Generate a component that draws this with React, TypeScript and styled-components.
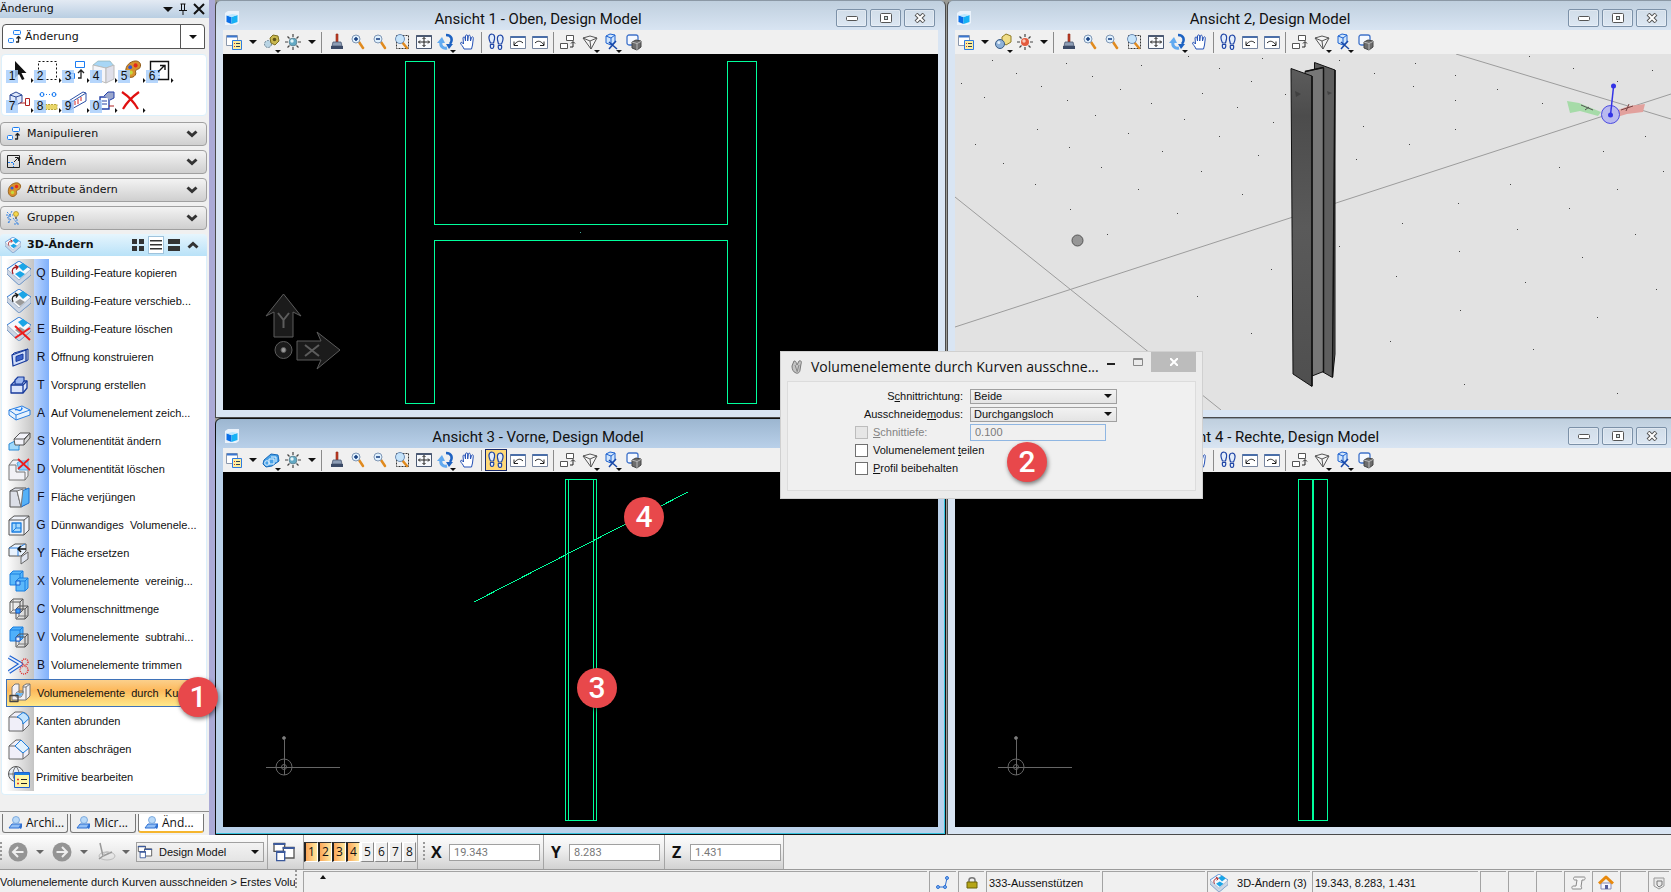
import React from "react";
import type { ReactNode } from "react";
import styled, { createGlobalStyle, css } from "styled-components";

const ui = `"Liberation Sans", Arial, sans-serif`;
const title = `"Open Sans", "Noto Sans", sans-serif`;
const caption = `Roboto, "Open Sans", sans-serif`;
const wide = `"DejaVu Sans", Verdana, sans-serif`;

const Global = createGlobalStyle`
  *, *::before, *::after { box-sizing: border-box; }
  body { margin: 0; background: #f0f0f0; font-family: ${ui}; font-size: 12px; color: #111; }
  button, select, input { font: inherit; color: inherit; margin: 0; }
  button { padding: 0; border: 0; background: none; }
  svg { display: block; flex: none; }
`;

/* ---------- icons ---------- */

const Ic = ({ s = 18, children }: { s?: number; children: ReactNode }) => (
  <svg width={s} height={s} viewBox={`0 0 ${s} ${s}`} fill="none" strokeLinejoin="round" aria-hidden="true">
    {children}
  </svg>
);

const Caret = ({ s = 8 }: { s?: number }) => (
  <svg width={s} height={s / 2} viewBox="0 0 8 4" aria-hidden="true">
    <path d="M0 0h8L4 4z" fill="currentColor" />
  </svg>
);

const manipulate = (
  <Ic s={16}>
    <rect x="6.5" y="1.5" width="7" height="4" rx="1" stroke="#1c7df2" fill="#f4faff" />
    <rect x="1.5" y="9.5" width="5" height="4" rx="1" stroke="#1c7df2" fill="#f4faff" />
    <path d="M9 13h2.500V8M9.500 9.500l2-2 2 2" stroke="#222" strokeWidth="1.300" />
  </Ic>
);
const modify = (
  <Ic s={16}>
    <rect x="1.500" y="1.500" width="12" height="12" stroke="#222" />
    <path d="M2 8.500h5.500V13" stroke="#1c7df2" strokeDasharray="2 1" />
    <path d="M8 8l4-4M9 3.500h3.500V7" stroke="#222" />
  </Ic>
);
const Palette = ({ s }: { s: number }) => (
  <svg width={s} height={s} viewBox="0 0 16 16" aria-hidden="true">
    <path d="M9 1C13 0 16 3 14 6.500c-1 1.700-3 1-3.500 2.500-.5 1.300 1 2-.5 3.800C8 15.500 3.500 15 2.500 11 1.500 6.500 4 2.200 9 1z" fill="#d9902d" stroke="#8a5511" strokeWidth=".8" />
    <circle cx="6" cy="6" r="1.600" fill="#2f58d8" />
    <circle cx="10.500" cy="4.500" r="1.700" fill="#e22b1b" />
    <circle cx="6.500" cy="10.500" r="1.700" fill="#c5d93e" />
  </svg>
);
const groups = (
  <Ic s={16}>
    <path d="M1 2l3 3M6 1L4 5M1 8l4-2M2 13l3-4M7 8l4 5M11 9v5M8 14h6M3 5v9M0 5h7" stroke="#3d86e0" strokeDasharray="2 1" />
    <circle cx="10" cy="4" r="2.500" fill="#f5d84d" stroke="#a8821c" strokeWidth=".7" />
    <path d="M9 7h2v2H9z" fill="#777" />
  </Ic>
);
const Feature = ({ s = 24, x, arrow = true, grey }: { s?: number; x?: boolean; arrow?: boolean; grey?: boolean }) => (
  <svg width={s} height={s} viewBox="0 0 24 24" aria-hidden="true">
    <path d="M0 8L12 0l12 8v6L12 24 0 13z" fill="#f6f8fb" stroke="#2f7bd6" />
    <path d="M0 8l12 11 12-11v6L12 24 0 13z" fill="#cdd6e4" stroke="#7e95b5" strokeWidth=".6" />
    <path d="M11 5l5-3 5 4-5 4z" fill="#1ba5e6" />
    <path d="M8 13l5-3 5 3-5 4z" fill={grey ? "#9a9a9a" : "#1ba5e6"} />
    {arrow && <path d="M6 13c-2-4 0-7 4-7M8 4l3 2-2 2.500" fill="none" stroke={grey ? "#222" : "#a3161c"} strokeWidth="1.300" />}
    {x && <path d="M8 9l15 14M23 11L8 21" stroke="#ec1c1c" strokeWidth="2" />}
  </svg>
);
const icOpening = (
  <Ic s={24}>
    <path d="M5 10l14-5v11L6 21z" fill="#cfdcf8" stroke="#173a9c" strokeWidth="1.300" />
    <path d="M9 11.500l7-2.500v5L9 16.500z" fill="#3d63c9" stroke="#173a9c" />
    <path d="M5 10l2-2 14-4-2 1M21 4v11l-2 1" stroke="#173a9c" />
  </Ic>
);
const icBoss = (
  <Ic s={24}>
    <path d="M4 12l4-4h12v7l-4 5H4z" fill="#dbe5fb" stroke="#173a9c" strokeWidth="1.300" />
    <path d="M4 12h12v8M16 12l4-4" stroke="#173a9c" strokeWidth="1.300" />
    <path d="M8 11V7l3-3h6v4l-2 3z" fill="#9db8f0" stroke="#173a9c" strokeWidth="1.200" />
  </Ic>
);
const icDraw = (
  <Ic s={24}>
    <path d="M2 9l13-4 8 4v5L9 19l-7-5z" fill="#e6f2fe" stroke="#2b7fe0" />
    <path d="M2 9l7 5 14-5M9 14v5" stroke="#2b7fe0" />
    <path d="M8 9c2-2 4 2 6 0s1-2 0-2" stroke="#1c7df2" strokeWidth="1.300" />
  </Ic>
);
const icSolidMod = (
  <Ic s={24}>
    <path d="M2 15l6-3h9l-5 5v4H2z" fill="#9fd8fb" stroke="#2b8ad6" />
    <path d="M7 10l6-6h10l-6 7v5H8z" fill="#f3f3fa" stroke="#555" />
    <path d="M7 10h10l6-6v5l-6 7" stroke="#555" />
  </Ic>
);
const icSolidDel = (
  <Ic s={24}>
    <path d="M2 8l4-5h7v9h8v7l-3 4H2z" fill="#f1f1f6" stroke="#777" />
    <path d="M2 8h7v7h9v8" stroke="#777" />
    <path d="M10 6l3-2h8v9h-9z" fill="#8fd0fb" stroke="#5aa5dd" />
    <path d="M11 2l12 11M22 2L11 12" stroke="#ec1c1c" strokeWidth="1.700" />
  </Ic>
);
const icTaper = (
  <Ic s={24}>
    <path d="M3 6l5-3h11v16l-5 3H3z" fill="#dcdfe8" stroke="#555" />
    <path d="M3 6h7l4 16" stroke="#555" />
    <path d="M15 6l7-3v15l-8 4z" fill="#56b1f7" stroke="#1b6fd1" />
    <path d="M10 6l4 16 2-18z" fill="#f7f8fb" stroke="#777" />
  </Ic>
);
const icShell = (
  <Ic s={24}>
    <path d="M2 7l5-4h15v14l-5 5H2z" fill="#eef1f8" stroke="#555" />
    <path d="M2 7h15v15M17 7l5-4" stroke="#555" />
    <path d="M5 10h9v9H5z" fill="#a6d8fc" stroke="#1b7ee0" strokeWidth="1.300" />
    <path d="M5 19l4-4v-5M9 15h5" stroke="#1b7ee0" />
  </Ic>
);
const icReplace = (
  <Ic s={24}>
    <path d="M2 7l6-4h11v7l-5 5H2z" fill="#e8f2fd" stroke="#555" />
    <path d="M2 7h9v8M11 7l7-4" stroke="#2b7fe0" />
    <path d="M19 8h-7M14 5l-3 3 3 3" stroke="#111" strokeWidth="1.500" />
    <path d="M14 16l7-5v7l-7 5z" fill="#dfe4ef" stroke="#666" />
  </Ic>
);
const edgeColor = (fill: string) => (fill === "none" ? "#555" : "#1b7ee0");
const Bool = ({ a, b, c }: { a: string; b: string; c: string }) => (
  <Ic s={24}>
    <path d="M3 5l3-3h10v11l-3 3H3z" fill={a} stroke={edgeColor(a)} />
    <path d="M3 5h10v11M13 5l3-3" stroke={edgeColor(a)} />
    {a === "none" && <path d="M6 2v11h10M6 13l-3 3" stroke="#777" />}
    <path d="M9 12l3-3h9v10l-3 3H9z" fill={b} stroke={edgeColor(b)} />
    <path d="M9 12h9v10M18 12l3-3" stroke={edgeColor(b)} />
    {b === "none" && <path d="M12 9v10h9M12 19l-3 3" stroke="#777" />}
    <path d="M9 12h4v4H9z" fill={c} stroke="#1b5fd1" />
  </Ic>
);
const icTrim = (
  <Ic s={24}>
    <path d="M2 4l12 7L2 19" stroke="#1b5fd1" strokeWidth="4" />
    <path d="M2 4l12 7L2 19" stroke="#e4effc" strokeWidth="2" />
    <circle cx="18" cy="9" r="3" stroke="#e02b2b" strokeDasharray="1 1" strokeWidth="1.500" />
    <circle cx="17" cy="17" r="4" stroke="#e02b2b" strokeDasharray="1 1" strokeWidth="1.500" />
  </Ic>
);
const icCut = (
  <Ic s={24}>
    <path d="M4 6l3-3h4v9h4V5l3-2h4v12l-4 4H4z" fill="#f2f0f4" stroke="#777" />
    <path d="M8 12l3-2h4v3l-2 3H8zM18 19V6l4-3M18 6h-3" stroke="#777" fill="none" />
    <path d="M8 12h7l-2 3H8z" fill="#6ab8f7" />
    <path d="M2 14.500h8v6H2z" stroke="#444" strokeWidth="1.300" />
  </Ic>
);
const icRound = (
  <Ic s={24}>
    <path d="M2 8l6-5h6c5 0 8 4 8 7v6l-6 6H2z" fill="#f0eff9" stroke="#666" />
    <path d="M2 8h6c5 0 8 4 8 7v7" stroke="#666" />
    <path d="M10 8l6-4.500c3 1 5.500 3.500 6 6L16 15c0-3-2-6-6-7z" fill="#c3e4fd" stroke="#1b7ee0" />
  </Ic>
);
const icChamfer = (
  <Ic s={24}>
    <path d="M2 9l7-6h5l8 8v6l-6 5H2z" fill="#f0eff9" stroke="#666" />
    <path d="M2 9h6l8 7v6" stroke="#666" />
    <path d="M8 9l6-6 8 8-6 5z" fill="#e2f1fd" stroke="#1b7ee0" />
  </Ic>
);
const icPrim = (
  <Ic s={24}>
    <circle cx="9" cy="9" r="7.500" fill="#e8edf4" stroke="#555" />
    <path d="M2 9h14M9 1.500c-4 4-4 11 0 15M9 1.500c4 4 4 11 0 15" stroke="#555" strokeWidth=".8" />
    <rect x="7.500" y="7.500" width="15" height="15" fill="#fff6a5" stroke="#1b5fd1" />
    <path d="M8 9h14" stroke="#1b7ee0" strokeWidth="2" />
    <path d="M10 14.500h2M10 18.500h2" stroke="#d33" strokeWidth="1.500" />
    <path d="M14 14.500h6M14 18.500h6" stroke="#222" />
  </Ic>
);

/* view toolbar icons, 18px */
const vbProps = (
  <Ic>
    <path d="M1.500 2.500h11v10h-11z" fill="#fff" stroke="#8b98ad" />
    <path d="M2 3.500h10" stroke="#3b76cf" strokeWidth="2" />
    <path d="M7.500 7.500h9v9h-9z" fill="#ffef9f" stroke="#2f7be0" />
    <path d="M9 10.500h1M9 13.500h1" stroke="#c33" />
    <path d="M11 10.500h4M11 13.500h4" stroke="#345" />
  </Ic>
);
const vbGearA = (
  <Ic>
    <circle cx="6" cy="11" r="3.500" fill="#b9d4e4" stroke="#6b8393" strokeDasharray="2 1" />
    <path d="M8 5l3-3 5 1 1 5-4 4-4-2z" fill="#c9b84f" stroke="#7d6f22" />
    <circle cx="12.500" cy="6.500" r="1.800" fill="#5f5518" />
  </Ic>
);
const vbGearB = (
  <Ic>
    <path d="M8 4l4-3 5 2v6l-5 3-4-3z" fill="#f0dd86" stroke="#8f7b25" />
    <circle cx="6" cy="11" r="4.500" fill="#8fb2d9" stroke="#3b5d86" />
    <circle cx="4.800" cy="9.500" r="1.500" fill="#e6f1fb" />
  </Ic>
);
const vbGearC = (
  <Ic>
    <path d="M2 9l7-6 7 1 1 6-7 5-6 1-3-3z" fill="#4ba3e8" stroke="#1567b8" />
    <path d="M7 8h5v5H7zM9 6h5v5" stroke="#e8f6ff" />
    <circle cx="5" cy="12" r="2.300" stroke="#dff1ff" />
  </Ic>
);
const Sun = ({ c }: { c: string }) => (
  <Ic>
    <path d="M9 1v3M9 14v3M1 9h3M14 9h3M3.500 3.500l2 2M12.500 12.500l2 2M14.500 3.500l-2 2M5.500 12.500l-2 2" stroke="#444" strokeWidth="1.200" />
    <circle cx="9" cy="9" r="4" fill={c === "red" ? "#e35b3e" : "#62a9c4"} stroke={c === "red" ? "none" : "#55717c"} strokeWidth=".6" />
    <circle cx="8" cy="8" r="1.700" fill={c === "red" ? "#f9c8b8" : "#e2f5fa"} />
  </Ic>
);
const vbBrush = (
  <Ic>
    <path d="M9 1h2v8H9z" fill="#c33d25" stroke="#8a2816" strokeWidth=".6" />
    <path d="M6 9h8l1 4H5z" fill="#8d9db5" stroke="#4b5972" strokeWidth=".8" />
    <path d="M4 13h12v3H4z" fill="#3b4a66" />
  </Ic>
);
const Lens = ({ plus }: { plus?: boolean }) => (
  <Ic>
    <path d="M10 9l4 6" stroke="#e08a1e" strokeWidth="2.500" strokeLinecap="round" />
    <circle cx="7" cy="6" r="4" fill="#dff0fd" stroke="#8097b5" />
    <path d={plus ? "M5 6h4M7 4v4" : "M5 6h4"} stroke="#123a7d" strokeWidth="1.500" />
  </Ic>
);
const vbZoomWin = (
  <Ic>
    <path d="M3.500 2.500h12v13h-12z" stroke="#333" strokeDasharray="2 1" />
    <path d="M9 9l5 6" stroke="#e08a1e" strokeWidth="2.500" strokeLinecap="round" />
    <circle cx="7" cy="6" r="4.500" fill="#c5e3fa" stroke="#6e8db5" />
  </Ic>
);
const vbFit = (
  <Ic>
    <path d="M1.500 2.500h15v13h-15z" fill="#f7f9fc" stroke="#4b5972" />
    <path d="M1.500 3h15" stroke="#4b5972" strokeWidth="2" />
    <path d="M9 4.500v9M3.500 9h11M7.500 6L9 4.500 10.500 6M7.500 12L9 13.500l1.500-1.500M5 7.500L3.500 9 5 10.500M13 7.500L14.500 9 13 10.500" stroke="#222" />
  </Ic>
);
const vbRotate = (
  <Ic>
    <path d="M9 2c6 0 7 5 4 9" stroke="#1d62c2" strokeWidth="2.500" />
    <path d="M9 11h7l-4 5z" fill="#1d62c2" />
    <path d="M10 15C6 16 3 13 4 9" stroke="#62aaf0" strokeWidth="3" />
    <path d="M0 10h8L5 4z" fill="#62aaf0" />
  </Ic>
);
const vbHand = (
  <Ic>
    <path d="M5 16c-1-3-3-4-3.500-6 .5-1.500 2-.5 3 1L4 5c.3-1.500 1.800-1.500 2 0l.5 3V3c.3-1.500 2-1.500 2.200 0v5l.6-5c.4-1.300 2-1 2 .4L11.500 8l1-3.500c.6-1.200 2-.7 1.800.7L13.500 12l-1 4z" fill="#fff" stroke="#2450b5" />
  </Ic>
);
const vbFeet = (
  <Ic>
    <g fill="#e3edfb" stroke="#1f45a5" strokeWidth="1.200">
      <path d="M4.500 1C7 1 8 3 7.500 6L6.500 10h-3C2 7 .5 2 4.500 1z" />
      <path d="M3.500 11.500h3.200c.3 2-.2 4-1.700 4s-2-2-1.500-4z" />
      <path d="M13.500 2c-2.500 0-3.500 2-3 5l1 4h3c1.500-3 3-8-1-9z" />
      <path d="M14.500 12.500h-3.200c-.3 2 .2 4 1.700 4s2-2 1.500-4z" />
    </g>
  </Ic>
);
const Nav = ({ fwd }: { fwd?: boolean }) => (
  <Ic>
    <path d="M1.500 3.500h15v12h-15z" fill="#fff" stroke="#77859e" />
    <path d="M1.500 4h15" stroke="#4a6ea8" strokeWidth="2" />
    {fwd ? <path d="M4 10c3-3 6-2 9 2M13 8.500V12.500H9" stroke="#222" /> : <path d="M14 10c-3-3-6-2-9 2M5 8.500v4h4" stroke="#222" />}
  </Ic>
);
const vbCopy = (
  <Ic>
    <path d="M7.500 2.500h7v5h-7zM1.500 10.500h7v5h-7z" fill="#fff" stroke="#555" />
    <path d="M11 14h3V9M12 10.500L14 8.500l2 2" stroke="#222" />
  </Ic>
);
const vbCam = (
  <Ic>
    <path d="M2 5l7-2 7 2-6 11z" fill="#f4f4f4" stroke="#555" />
    <path d="M2 5l7 3 7-3M9 8l1 8" stroke="#555" />
  </Ic>
);
const vbClip = (
  <Ic>
    <path d="M3 3l4-2 5 1v7l-4 3-5-2z" fill="#cfe4fb" stroke="#1d62d0" />
    <path d="M3 3l5 2 4-3M8 5v7" stroke="#1d62d0" />
    <path d="M6 9l8 7M13 8l-7 8" stroke="#1747a8" strokeWidth="1.500" />
  </Ic>
);
const vbCube = (
  <Ic>
    <rect x="2" y="2" width="11" height="10" rx="2" fill="#f4f8ff" stroke="#3f72c9" strokeWidth="1.300" />
    <path d="M7 9l4-2 5 1v6l-4 3-5-2z" fill="#6d6d6d" stroke="#444" />
    <path d="M7 9l5 1.500 4-2M12 10.500V17" stroke="#ccc" strokeWidth=".8" />
  </Ic>
);
const winIcon = (
  <Ic s={16}>
    <path d="M1 3l3-2h11v12l-3 2H1z" fill="#eaf2fb" />
    <path d="M2.500 5.500l5 1.500v7l-5-2z" fill="#0a6fe8" />
    <path d="M7.500 7l6-2v7l-6 2z" fill="#16b1f5" />
    <path d="M2.500 5.500l6-1.500 5 1-6 2z" fill="#b9e6ff" />
  </Ic>
);
const person = (
  <Ic s={16}>
    <path d="M4 9h9l-2 4H1z" fill="#8fbdf5" stroke="#2d6fd2" />
    <path d="M11 13l2-4 1-1v4l-1 2z" fill="#2d6fd2" />
    <circle cx="8" cy="5" r="3.500" fill="#b9d9f8" stroke="#5c93d4" strokeWidth=".7" />
  </Ic>
);
const modelsIcon = (s: number) => (
  <svg width={s} height={s} viewBox="0 0 18 18" fill="none" aria-hidden="true">
    <path d="M1.500 2.500h8v6h-8z" fill="#fff" stroke="#555" />
    <path d="M8.500 5.500h8v8h-8z" fill="#fff" stroke="#555" />
    <path d="M3.500 8.500h6v7h-6z" fill="#fff" stroke="#3c5a9c" />
    <path d="M1 3h9M8 6h9M3 9h7" stroke="#3c5a9c" strokeWidth="1.500" />
  </svg>
);

/* palette tiles, 28 x 24 */
const pal: { label: string; art: ReactNode }[] = [
  { label: "1", art: <path d="M9 1v17l4-4 3 6 2.500-1-3-6h5z" fill="#111" /> },
  { label: "2", art: <path d="M4.500 1.500h18v18h-18z" stroke="#111" strokeDasharray="2 2" fill="none" /> },
  { label: "3", art: <g fill="none"><path d="M13.500 1.500h9v6h-9z" stroke="#1c7df2" /><path d="M7.500 13.500h5v5h-5z" stroke="#1c7df2" /><path d="M16 18h3v-7M16 13l3-3 3 3" stroke="#222" strokeWidth="1.300" /></g> },
  { label: "4", art: <g><path d="M3 5l5-4h12l4 5-9 2z" fill="#a8d6f5" stroke="#8aa" strokeWidth=".6" /><path d="M3 5l13 3v15L3 18z" fill="#f5f5f9" stroke="#bbb" /><path d="M16 8l8-3v14l-8 4z" fill="#e0e0ea" stroke="#bbb" /></g> },
  { label: "5", art: <g transform="translate(5 0) scale(1.2)"><Palette s={16} /></g> },
  { label: "6", art: <g fill="none"><path d="M4.500 1.500h18v18h-18z" stroke="#111" strokeWidth="1.400" /><path d="M5 10.500h8V19" stroke="#1c7df2" strokeDasharray="2 1" /><path d="M12 12l6-6M14 5.500h5V10" stroke="#111" strokeWidth="1.400" /></g> },
  { label: "7", art: <g fill="none" stroke="#2a4796"><path d="M4 5l6-3 6 3v7l-6 3-6-3z" fill="#dfe9fb" /><path d="M4 5l6 2 6-2M10 7v7" /><path d="M14 13h6M19.500 8.500h4v7h-4z" stroke="#b02222" /></g> },
  { label: "8", art: <g fill="none"><path d="M6 4.500h16" stroke="#1c7df2" strokeDasharray="1 2" /><circle cx="8" cy="4.500" r="2" stroke="#1c7df2" /><circle cx="20" cy="4.500" r="2" stroke="#1c7df2" /><path d="M8 14.500h15v5H8z" fill="#e9d668" stroke="#bba83c" strokeDasharray="2 1" /></g> },
  { label: "9", art: <g><path d="M5 12L21 2l3 1v8L8 20l-3-2z" fill="#fff" stroke="#2a4fa6" /><path d="M5 12l3 1 16-10" fill="none" stroke="#2a4fa6" /><path d="M10 13v5M13 11v4M16 9v5M19 7v4" stroke="#d02424" /></g> },
  { label: "0", art: <g fill="none" stroke="#2440a8"><path d="M10 7h9v12h-9z" fill="#fff" strokeWidth="1.400" /><path d="M12 11h5M12 14h5" /><path d="M14 6l4-4h6v6l-4 2" fill="#9aa6cc" /><path d="M6 15l5-3M19 16h5" stroke="#b02222" /></g> },
  { label: "", art: <path d="M4 2c6 4 12 10 16 17M21 2C14 7 9 12 5 19" fill="none" stroke="#e01010" strokeWidth="2.200" /> },
];

/* ---------- layout ---------- */

const Shell = styled.div`
  display: flex;
  flex-direction: column;
  height: 100vh;
  min-height: 892px;
  overflow: hidden;
`;
const Main = styled.div`
  display: flex;
  flex: 1;
  min-height: 0;
`;
const Sidebar = styled.aside`
  position: relative;
  z-index: 3;
  width: 215px;
  flex: none;
  display: flex;
  flex-direction: column;
  background: #f0f0f0;
  border-right: 6px solid #abaad6;
`;
const DockTitle = styled.header`
  height: 18px;
  display: flex;
  align-items: center;
  gap: 6px;
  padding-right: 4px;
  background: linear-gradient(#e3eaf3, #b9cee2);
  font: 11px/18px ${wide};
  span { flex: 1; }
`;
const Combo = styled.button`
  display: flex;
  align-items: center;
  height: 25px;
  margin: 6px 4px 0 2px;
  padding-left: 4px;
  gap: 2px;
  background: #fff;
  border: 1px solid #555;
  border-radius: 4px 4px 0 0;
  font: 11px/20px ${wide};
  text-align: left;
  > span { flex: 1; }
  i {
    display: flex;
    align-items: center;
    justify-content: center;
    width: 24px;
    height: 100%;
    border-left: 1px solid #555;
  }
`;
const PaletteBox = styled.div`
  display: grid;
  grid-template-columns: repeat(6, 28px);
  grid-auto-rows: 30px;
  height: 62px;
  margin: 5px 2px 6px 1px;
  padding: 5px 0 0 4px;
  background: #fff;
  border: 1px solid #dcf0fb;
  border-radius: 4px;
`;
const Tile = styled.button`
  position: relative;
  width: 28px;
  height: 24px;
  b {
    position: absolute;
    left: 0;
    bottom: 1px;
    width: 12px;
    height: 13px;
    background: #a5cdfbd0;
    font: 12px/13px ${ui};
    text-align: center;
  }
`;
const Section = styled.button`
  display: flex;
  align-items: center;
  gap: 5px;
  height: 24px;
  flex: none;
  margin: 0 2px 4px 0;
  padding: 0 8px 0 5px;
  background: linear-gradient(#f3f3f3, #cfcfcf);
  border: 1px solid #a0a0a0;
  border-radius: 4px;
  font: 11px/20px ${wide};
  text-align: left;
  > span { flex: 1; }
`;
const OpenSection = styled.div`
  display: flex;
  align-items: center;
  height: 22px;
  flex: none;
  margin-right: 2px;
  padding: 0 8px 0 5px;
  gap: 6px;
  background: linear-gradient(#e6f5fd, #b9e2f8);
  border-radius: 4px 4px 0 0;
  font: bold 11px/20px ${wide};
  > span { flex: 1; }
`;
const Modes = styled.div`
  display: flex;
  gap: 4px;
  button { width: 14px; height: 16px; }
  button:nth-child(2) { background: #fff; outline: 1px solid #9fc3dc; }
`;
const ToolList = styled.div`
  display: flex;
  flex-direction: column;
  margin: 0 2px 0 1px;
  padding: 3px 0;
  background: #fff;
  border: 1px solid #dcf0fb;
  border-top: 0;
  border-radius: 0 0 4px 4px;
`;
const Tool = styled.button<{ $keyed: boolean; $active?: boolean }>`
  position: relative;
  display: flex;
  align-items: center;
  height: 28px;
  margin-left: 4px;
  text-align: left;
  font: 12px/14px ${ui};
  white-space: pre;
  background: ${(p) =>
    p.$keyed
      ? "linear-gradient(90deg, #fff, #c4c4c4 28px, #bcd5fd 28px, #7fb0fb 43px, #fff 43px)"
      : "linear-gradient(90deg, #fff, #c4c4c4 28px, #fff 28px)"};
  ${(p) =>
    p.$active &&
    css`
      background: linear-gradient(#fbd08c, #fdb95c 40%, #ffe98a);
      border: 1px solid #3f72b8;
      margin-right: 2px;
      z-index: 2;
    `}
`;
const ToolIcon = styled.span`
  width: 28px;
  padding-left: 1px;
`;
const Hotkey = styled.kbd`
  width: 14px;
  font: 12px/14px ${ui};
  color: #112;
  text-align: center;
`;
const ToolText = styled.span<{ $keyed: boolean }>`
  padding-left: ${(p) => (p.$keyed ? 3 : 2)}px;
  font-size: 11px;
`;
const Tabs = styled.nav`
  display: flex;
  gap: 2px;
  margin-top: auto;
  margin-bottom: 2px;
  height: 22px;
  padding: 2px 0 0 2px;
  border-top: 1px solid #8d8d8d;
`;
const Tab = styled.button<{ $on?: boolean }>`
  display: flex;
  align-items: center;
  gap: 2px;
  width: 66px;
  padding-left: 5px;
  border: 1px solid #777;
  border-top: 0;
  border-radius: 0 0 3px 3px;
  font: 12px/16px ${title};
  background: ${(p) => (p.$on ? "#fff" : "#f0f0f0")};
  ${(p) => p.$on && "border-bottom: 2px solid #f5b52e;"}
`;

const Workspace = styled.main`
  position: relative;
  flex: 1;
  min-width: 0;
  display: grid;
  grid-template-columns: minmax(0, 731fr) minmax(0, 724fr);
  grid-template-rows: minmax(0, 418fr) minmax(0, 417fr);
  column-gap: 1px;
  background: #9a9a94;
`;
const ViewFrame = styled.section<{ $active?: boolean; $edge?: boolean }>`
  display: flex;
  flex-direction: column;
  padding: 0 ${(p) => (p.$edge ? 0 : 7)}px 7px 7px;
  border: 1px solid #4a4a4a;
  ${(p) => p.$edge && "border-right: 0;"}
  border-top-color: #8b98a5;
  border-radius: 6px ${(p) => (p.$edge ? 0 : 6)}px 0 0;
  background: ${(p) =>
    p.$active ? "linear-gradient(#9cb6d0, #bad1ea 30px)" : "linear-gradient(#bfcfde, #d9e5f3 30px)"};
  ${(p) =>
    p.$active &&
    css`
      border-color: #111;
      box-shadow: inset 0 -1px #35c3df, inset -1px 0 #35c3df;
    `}
`;
const ViewTitle = styled.header<{ $edge?: boolean }>`
  display: flex;
  align-items: center;
  gap: 3px;
  height: 29px;
  flex: none;
  padding: 5px ${(p) => (p.$edge ? 4 : 3)}px 0 1px;
  h2 {
    flex: 1;
    margin: 0;
    padding-top: 1px;
    font: 15px/20px ${caption};
    text-align: center;
    white-space: nowrap;
  }
`;
const WinButton = styled.button`
  display: flex;
  align-items: center;
  justify-content: center;
  width: 31px;
  height: 18px;
  border: 1px solid #7c91a8;
  border-radius: 2px;
  background: #ffffff30;
  box-shadow: inset 0 0 0 1px #ffffff50;
`;
const ViewTools = styled.div`
  display: flex;
  align-items: center;
  height: 24px;
  flex: none;
  background: #f0f0f0;
`;
const IconButton = styled.button<{ $on?: boolean }>`
  position: relative;
  display: flex;
  align-items: center;
  justify-content: center;
  width: 22px;
  height: 22px;
  ${(p) => p.$on && "background: #ffd978; border: 1px solid #1b2c6e;"}
`;
const MoreMark = styled.span`
  position: absolute;
  right: 1px;
  bottom: 0;
`;
const CaretButton = styled.button`
  display: flex;
  align-items: center;
  justify-content: center;
  width: 15px;
  height: 22px;
`;
const Sep = styled.span`
  width: 1px;
  height: 21px;
  margin: 0 3px 0 2px;
  background: #8b8b8b;
`;
const Canvas = styled.div<{ $light?: boolean }>`
  position: relative;
  flex: 1;
  min-height: 0;
  background: ${(p) => (p.$light ? "#e2e2e2" : "#000")};
  overflow: hidden;
  > svg { width: 100%; height: 100%; }
`;
const Badge = styled.span<{ $x: number; $y: number }>`
  position: absolute;
  left: ${(p) => p.$x - 20}px;
  top: ${(p) => p.$y - 20}px;
  z-index: 5;
  width: 40px;
  height: 40px;
  border-radius: 50%;
  background: #e8484b;
  box-shadow: 1px 2px 4px #00000080;
  color: #fff;
  font: 500 30px/40px ${caption};
  text-align: center;
`;

const Dialog = styled.section`
  position: absolute;
  z-index: 4;
  left: 565px;
  top: 351px;
  width: 423px;
  padding: 0 6px 7px;
  background: #ebebeb;
  border: 1px solid #d0d0d0;
`;
const DialogTitle = styled.header`
  display: flex;
  height: 29px;
  h2 {
    flex: 1;
    min-width: 0;
    margin: 0;
    padding-left: 6px;
    font: 14px/29px ${title};
    white-space: nowrap;
  }
  > svg { margin: 7px 0 0 2px; }
`;
const DialogButton = styled.button<{ $close?: boolean }>`
  display: flex;
  align-items: center;
  justify-content: center;
  flex: none;
  width: ${(p) => (p.$close ? 45 : 27)}px;
  height: 20px;
  ${(p) => p.$close && "background: #bcbcbc;"}
`;
const Form = styled.form`
  height: 110px;
  padding: 5px 0 0 67px;
  background: #f0f0f0;
  border: 1px solid #dcdcdc;
  font-size: 11px;
`;
const Row = styled.div`
  display: flex;
  align-items: center;
  height: 18px;
  gap: 7px;
`;
const Lead = styled.div`
  width: 108px;
  display: flex;
  align-items: center;
  justify-content: flex-end;
  label { white-space: nowrap; }
`;
const CheckLead = styled(Lead)<{ $off?: boolean }>`
  justify-content: flex-start;
  gap: 5px;
  color: ${(p) => (p.$off ? "#838383" : "inherit")};
`;
const Check = styled.input`
  appearance: none;
  flex: none;
  width: 13px;
  height: 13px;
  border: 1px solid #707070;
  background: #fff;
  &:disabled { border-color: #bcbcbc; background: #e6e6e6; }
`;
const Pick = styled.span<{ $w: number; $h: number; $pad: number }>`
  position: relative;
  display: flex;
  align-items: center;
  width: ${(p) => p.$w}px;
  height: ${(p) => p.$h}px;
  select {
    appearance: none;
    width: 100%;
    height: 100%;
    padding: 0 16px 0 ${(p) => p.$pad}px;
    border: 1px solid #a0a0a0;
    border-radius: 0;
    background: linear-gradient(#f2f2f2, #e4e4e4);
    font: 11px/13px ${ui};
  }
  > svg { position: absolute; right: 5px; pointer-events: none; }
  > svg:first-child { right: auto; left: 1px; }
`;
const DepthField = styled.input`
  width: 136px;
  height: 17px;
  padding: 0 4px;
  border: 1px solid #8fb6e2;
  background: #f0f0f0;
  color: #7a7a7a;
`;

const BottomBar = styled.div`
  display: flex;
  height: 35px;
  flex: none;
  border-bottom: 1px solid #9a9a9a;
`;
const BarGroup = styled.div<{ $w: number; $pad?: number }>`
  display: flex;
  align-items: center;
  width: ${(p) => p.$w}px;
  padding-left: ${(p) => p.$pad ?? 0}px;
  background: linear-gradient(#fdfdfd, #eee 45%, #d2d2d2);
  border-right: 1px solid #a5a5a5;
`;
const Grip = styled.span`
  width: 2px;
  height: 20px;
  flex: none;
  margin-right: 6px;
  background: repeating-linear-gradient(#999 0 2px, transparent 2px 4px);
`;
const Drop = styled.button<{ $w: number }>`
  display: flex;
  justify-content: center;
  width: ${(p) => p.$w}px;
  color: #666;
`;
const ViewToggle = styled.button<{ $on: boolean }>`
  width: 14px;
  height: 20px;
  border: solid;
  border-width: 1px 1px 1px 2px;
  border-color: ${(p) => (p.$on ? "#333 #fff #fff #222" : "#fff #888 #888 #fff")};
  background: ${(p) => (p.$on ? "linear-gradient(90deg, #fba75a, #ffe9a0)" : "#efefef")};
  font: 12px/18px ${title};
`;
const Axis = styled.label`
  width: 18px;
  font: bold 16px/20px ${title};
`;
const Coord = styled.input`
  width: 91px;
  height: 17px;
  padding: 0 4px;
  border: 1px solid #a0a0a0;
  background: #fff;
  color: #777;
  font: 11px/13px ${caption};
`;
const Status = styled.footer`
  display: flex;
  height: 22px;
  flex: none;
  font: 11px/24px ${ui};
`;
const Prompt = styled.span`
  width: 295px;
  overflow: hidden;
  white-space: nowrap;
`;
const Cell = styled.span<{ $w?: number }>`
  ${(p) => (p.$w ? `width: ${p.$w}px;` : "flex: 1; min-width: 0;")}
  height: 22px;
  display: flex;
  align-items: center;
  gap: 6px;
  margin: 1px 2px 0 0;
  padding-left: 2px;
  border-top: 1px solid #a3a3a3;
  border-left: 1px solid #a3a3a3;
  white-space: nowrap;
  overflow: hidden;
`;
const IconCell = styled(Cell)`
  justify-content: center;
  padding: 0;
`;

/* ---------- data ---------- */

const tools: { k?: string; t: string; i: ReactNode; active?: boolean }[] = [
  { k: "Q", t: "Building-Feature kopieren", i: <Feature /> },
  { k: "W", t: "Building-Feature verschieb...", i: <Feature grey /> },
  { k: "E", t: "Building-Feature löschen", i: <Feature grey arrow={false} x /> },
  { k: "R", t: "Öffnung konstruieren", i: icOpening },
  { k: "T", t: "Vorsprung erstellen", i: icBoss },
  { k: "A", t: "Auf Volumenelement zeich...", i: icDraw },
  { k: "S", t: "Volumenentität ändern", i: icSolidMod },
  { k: "D", t: "Volumenentität löschen", i: icSolidDel },
  { k: "F", t: "Fläche verjüngen", i: icTaper },
  { k: "G", t: "Dünnwandiges  Volumenele...", i: icShell },
  { k: "Y", t: "Fläche ersetzen", i: icReplace },
  { k: "X", t: "Volumenelemente  vereinig...", i: <Bool a="#5bb8fa" b="#5bb8fa" c="#a8dcff" /> },
  { k: "C", t: "Volumenschnittmenge", i: <Bool a="none" b="none" c="#3fa4f7" /> },
  { k: "V", t: "Volumenelemente  subtrahi...", i: <Bool a="#4fb0fa" b="none" c="#f4f4f4" /> },
  { k: "B", t: "Volumenelemente trimmen", i: icTrim },
  { t: "Volumenelemente  durch  Kur...", i: icCut, active: true },
  { t: "Kanten abrunden", i: icRound },
  { t: "Kanten abschrägen", i: icChamfer },
  { t: "Primitive bearbeiten", i: icPrim },
];

const sections: [string, ReactNode][] = [
  ["Manipulieren", manipulate],
  ["Ändern", modify],
  ["Attribute ändern", <Palette key="p" s={16} />],
  ["Gruppen", groups],
];

const gridDots: [number, number][] = [
  [37,6],[111,9],[186,11],[233,2],[307,4],[384,6],[460,9],[574,2],[618,14],[697,16],[61,19],[137,22],[264,14],[296,27],[419,19],[500,21],[662,27],
  [6,29],[86,32],[165,35],[247,39],[330,40],[458,32],[542,35],[29,43],[112,46],[196,49],[282,53],[500,46],[587,49],[140,61],[229,65],[318,68],[690,82],
  [82,75],[173,79],[264,82],[408,72],[500,75],[20,90],[114,93],[207,97],[303,101],[454,90],[648,97],[48,109],[146,113],[246,117],[401,105],[604,113],
  [708,117],[80,130],[183,135],[287,140],[555,130],[662,135],[115,155],[222,159],[503,149],[614,154],[152,180],[447,169],[562,175],[680,180],[384,192],
  [504,197],[627,203],[316,215],[441,222],[570,228],[701,235],[242,242],[505,256],[642,263],[296,279],[435,287],[578,295],[509,330],[662,339],
];

/* ---------- drawings ---------- */

const MINT = "#00ff9c";

const TopDrawing = () => (
  <svg viewBox="0 0 715 356" fill="none">
    <path d="M182.500 7.500H211.500V170.500H504.500V7.500H533.500V349.500H504.500V186.500H211.500V349.500H182.500Z" stroke={MINT} shapeRendering="crispEdges" />
    <path d="M357 178h1v1h-1z" fill="#4a9" />
    <g fill="#1b1b1b" stroke="#5c5c5c">
      <path d="M60.500 240L43 262l8-4v25h19v-25l8 4z" />
      <path d="M117 296L94 278l4 9H74v19h24l-4 9z" />
      <circle cx="60.500" cy="296" r="8.500" />
      <circle cx="60.500" cy="296" r="2.500" fill="#999" />
      <path d="M55 259l5.500 7 5.500-7M60.500 265v9M82 291l14 11M82 302l14-11" fill="none" strokeWidth="2" />
    </g>
  </svg>
);

const Origin = ({ x }: { x: number }) => (
  <g stroke="#666" transform={`translate(${x} 295)`}>
    <circle r="8" />
    <circle r="2.500" />
    <path d="M.5 8V-29M-18 .5H56" shapeRendering="crispEdges" />
    <circle cy="-29" r="1.500" fill="#888" />
  </g>
);

const FrontDrawing = () => (
  <svg viewBox="0 0 715 355" fill="none">
    <path d="M342.500 7.500H373.500V348.500H342.500ZM345.500 7V349M370.500 7V349" stroke={MINT} shapeRendering="crispEdges" />
    <path d="M251 130L465 20" stroke={MINT} shapeRendering="crispEdges" />
    <Origin x={61} />
  </svg>
);

const SideDrawing = () => (
  <svg viewBox="0 0 716 355" fill="none">
    <path d="M343.500 7.500H372.500V348.500H343.500Z" stroke={MINT} shapeRendering="crispEdges" />
    <path d="M358 7V349" stroke={MINT} strokeWidth="2" shapeRendering="crispEdges" />
    <Origin x={61} />
  </svg>
);

const IsoDrawing = () => (
  <svg viewBox="0 0 716 356" fill="none">
    <defs>
      <linearGradient id="steel" x1="0" y1="0" x2="0" y2="1">
        <stop offset="0" stopColor="#5c5c5c" />
        <stop offset=".15" stopColor="#4c4c4c" />
        <stop offset=".5" stopColor="#5a5a5a" />
        <stop offset="1" stopColor="#4f4f4f" />
      </linearGradient>
    </defs>
    <path d="M0 273L716 40M0 143L266 356M501 0L716 65" stroke="#9c9c9c" />
    {gridDots.map(([x, y]) => (
      <rect key={`${x}-${y}`} x={x} y={y} width="1" height="1" fill="#444" />
    ))}
    <circle cx="122.500" cy="186.500" r="5.500" fill="#969696" stroke="#555" />
    <g stroke="#111">
      <path d="M359.500 8.500L380 16V300L377.500 323.500L367 317.500L359 300z" fill="#5e5e5e" />
      <path d="M350 17.500L368.500 13.500V317.500L357 322z" fill="#777" />
      <path d="M336 14.500L357 22V332.500L338 320z" fill="url(#steel)" />
      <path d="M357 22V332M368.500 14V318M380 16L377.500 323M350 17.500L368.500 13.500" strokeWidth="1.500" />
    </g>
    <path d="M340 37l6 3-5 3zM372 37l5 2-4 2z" fill="#333" opacity=".6" />
    <path d="M612 47l12 2 22 9-3 4-18-5-10 2z" fill="#a6dba8" />
    <path d="M626 51l12 5M630 56l4-3" stroke="#555" />
    <path d="M660 57l14-5 16-2-2 8-16 2-10 3z" fill="#e2a19d" />
    <path d="M666 56l12-4M671 57l3-7" stroke="#744" />
    <circle cx="655.500" cy="60.500" r="9" fill="#b9b9ef" stroke="#4b4be0" />
    <path d="M655.500 61L658.500 33" stroke="#3333e6" strokeWidth="1.500" />
    <circle cx="655.500" cy="61" r="2.500" fill="#3333e6" />
    <circle cx="658.500" cy="32" r="2.500" fill="#3333e6" />
  </svg>
);

/* ---------- parts ---------- */

const More = () => (
  <MoreMark>
    <Caret s={6} />
  </MoreMark>
);

interface ViewProps {
  name: string;
  mode: ReactNode;
  sun?: string;
  active?: boolean;
  edge?: boolean;
  light?: boolean;
  children: ReactNode;
}

const View = ({ name, mode, sun = "blue", active, edge, light, children }: ViewProps) => (
  <ViewFrame $active={active} $edge={edge}>
    <ViewTitle $edge={edge}>
      {winIcon}
      <h2>{name}</h2>
      <WinButton aria-label="Minimieren">
        <svg width="12" height="6" viewBox="0 0 12 6"><rect x=".5" y="1.500" width="11" height="4" rx="1" fill="#fff" stroke="#555" /></svg>
      </WinButton>
      <WinButton aria-label="Maximieren">
        <svg width="12" height="10" viewBox="0 0 12 10"><rect x=".5" y=".5" width="11" height="9" rx="1" fill="#fff" stroke="#555" /><rect x="4.500" y="3.500" width="3" height="3" fill="#cdd" stroke="#555" /></svg>
      </WinButton>
      <WinButton aria-label="Schließen">
        <svg width="12" height="10" viewBox="0 0 12 10"><path d="M2 1l8 8M10 1L2 9" stroke="#555" strokeWidth="4" /><path d="M2.500 1.500l7 7M9.500 1.500l-7 7" stroke="#fff" strokeWidth="2" /></svg>
      </WinButton>
    </ViewTitle>
    <ViewTools>
      <IconButton aria-label="Ansichtsattribute">{vbProps}</IconButton>
      <CaretButton aria-label="Ansichten"><Caret s={8} /></CaretButton>
      <IconButton aria-label="Darstellung">{mode}<More /></IconButton>
      <IconButton aria-label="Helligkeit"><Sun c={sun} /></IconButton>
      <CaretButton aria-label="Helligkeit wählen"><Caret s={8} /></CaretButton>
      <Sep />
      <IconButton aria-label="Aktualisieren">{vbBrush}</IconButton>
      <IconButton aria-label="Vergrößern"><Lens plus /></IconButton>
      <IconButton aria-label="Verkleinern"><Lens /></IconButton>
      <IconButton aria-label="Bereich">{vbZoomWin}</IconButton>
      <IconButton aria-label="Einpassen">{vbFit}</IconButton>
      <IconButton aria-label="Drehen">{vbRotate}<More /></IconButton>
      <IconButton aria-label="Verschieben">{vbHand}</IconButton>
      <Sep />
      <IconButton aria-label="Gehen" $on={active}>{vbFeet}</IconButton>
      <IconButton aria-label="Vorherige"><Nav /></IconButton>
      <IconButton aria-label="Nächste"><Nav fwd /></IconButton>
      <Sep />
      <IconButton aria-label="Kopieren">{vbCopy}</IconButton>
      <IconButton aria-label="Kamera">{vbCam}<More /></IconButton>
      <IconButton aria-label="Ausschnitt">{vbClip}<More /></IconButton>
      <IconButton aria-label="Maske">{vbCube}</IconButton>
    </ViewTools>
    <Canvas $light={light}>{children}</Canvas>
  </ViewFrame>
);

const Chevron = ({ up }: { up?: boolean }) => (
  <svg width="12" height="8" viewBox="0 0 12 8" fill="none">
    <path d={up ? "M1.500 6.500L6 2.500l4.500 4" : "M1.500 1.500L6 5.500l4.500-4"} stroke="#333" strokeWidth="3" />
  </svg>
);

const Round = ({ fwd }: { fwd?: boolean }) => (
  <svg width="20" height="20" viewBox="0 0 20 20" fill="none">
    <circle cx="10" cy="10" r="9.500" fill="#949494" />
    <path d={fwd ? "M4.500 10h10M10 5l5 5-5 5" : "M15.500 10h-10M10 5l-5 5 5 5"} stroke="#eee" strokeWidth="2" />
  </svg>
);

export default function App() {
  return (
    <Shell>
      <Global />
      <Main>
        <Sidebar>
          <DockTitle>
            <span>Änderung</span>
            <Caret s={10} />
            <svg width="8" height="12" viewBox="0 0 8 12" fill="none"><path d="M1.500 1h5M2.500 1v6M5.500 1v6M0 7.500h8M4 8v4" stroke="#111" /></svg>
            <svg width="12" height="12" viewBox="0 0 12 12"><path d="M1 1l10 10M11 1L1 11" stroke="#111" strokeWidth="2" /></svg>
          </DockTitle>
          <Combo>
            {manipulate}
            <span>Änderung</span>
            <i><Caret s={8} /></i>
          </Combo>
          <PaletteBox>
            {pal.map((p, n) => (
              <Tile key={n} aria-label={`Werkzeug ${n + 1}`}>
                <svg width="28" height="24" viewBox="0 0 28 24">
                  {p.art}
                  <path d="M25 18v5l2.500-2.500z" fill="#111" />
                </svg>
                {p.label && <b>{p.label}</b>}
              </Tile>
            ))}
          </PaletteBox>
          {sections.map(([t, i]) => (
            <Section key={t}>{i}<span>{t}</span><Chevron /></Section>
          ))}
          <OpenSection>
            <Feature s={16} />
            <span>3D-Ändern</span>
            <Modes>
              <button aria-label="Symbole"><svg width="14" height="16" viewBox="0 0 14 16"><path d="M1 2h5v5H1zM8 2h5v5H8zM1 9h5v5H1zM8 9h5v5H8z" fill="#333" /></svg></button>
              <button aria-label="Liste"><svg width="14" height="16" viewBox="0 0 14 16"><path d="M1 3h12v1.500H1zM1 7h12v1.500H1zM1 11h12v1.500H1z" fill="#333" /></svg></button>
              <button aria-label="Felder"><svg width="14" height="16" viewBox="0 0 14 16"><path d="M1 2h12v5H1zM1 9h12v5H1z" fill="#333" /></svg></button>
            </Modes>
            <Chevron up />
          </OpenSection>
          <ToolList>
            {tools.map((t) => (
              <Tool key={t.t} $keyed={!!t.k} $active={t.active}>
                <ToolIcon>{t.i}</ToolIcon>
                {t.k && <Hotkey>{t.k}</Hotkey>}
                <ToolText $keyed={!!t.k}>{t.t}</ToolText>
                {t.active && <Badge $x={191} $y={17}>1</Badge>}
              </Tool>
            ))}
          </ToolList>
          <Tabs>
            <Tab>{person}Archi...</Tab>
            <Tab>{person}Micr...</Tab>
            <Tab $on>{person}Änd...</Tab>
          </Tabs>
        </Sidebar>

        <Workspace>
          <View name="Ansicht 1 - Oben, Design Model" mode={vbGearA}><TopDrawing /></View>
          <View name="Ansicht 2, Design Model" mode={vbGearB} sun="red" edge light><IsoDrawing /></View>
          <View name="Ansicht 3 - Vorne, Design Model" mode={vbGearC} active>
            <FrontDrawing />
            <Badge $x={374} $y={216}>3</Badge>
            <Badge $x={421} $y={45}>4</Badge>
          </View>
          <View name="Ansicht 4 - Rechte, Design Model" mode={vbGearC} edge><SideDrawing /></View>

          <Dialog>
            <DialogTitle>
              <Ic s={16}>
                <path d="M5 2c3 0 2 3 3 4l2-4c2-1 3 1 2 3l-1 6c0 2-2 4-4 3-3-1-4-4-4-7z" fill="#c4c4c4" stroke="#777" />
                <path d="M6 6l2 6M10 6l-2 7" stroke="#888" />
              </Ic>
              <h2>Volumenelemente durch Kurven ausschne...</h2>
              <DialogButton aria-label="Minimieren"><svg width="8" height="8" viewBox="0 0 8 8"><path d="M0 5h8v2H0z" fill="#222" /></svg></DialogButton>
              <DialogButton aria-label="Maximieren"><svg width="10" height="8" viewBox="0 0 10 8"><path d="M.5.500h9v7h-9zM0 1.500h10" fill="none" stroke="#888" /></svg></DialogButton>
              <DialogButton aria-label="Schließen" $close><svg width="8" height="8" viewBox="0 0 8 8"><path d="M0 0l8 8M8 0L0 8" stroke="#fff" strokeWidth="2" /></svg></DialogButton>
            </DialogTitle>
            <Form>
              <Row>
                <Lead><label htmlFor="dir">S<u>c</u>hnittrichtung:</label></Lead>
                <Pick $w={147} $h={15} $pad={3}><select id="dir"><option>Beide</option></select><Caret s={8} /></Pick>
              </Row>
              <Row>
                <Lead><label htmlFor="mode">Ausschneide<u>m</u>odus:</label></Lead>
                <Pick $w={147} $h={15} $pad={3}><select id="mode"><option>Durchgangsloch</option></select><Caret s={8} /></Pick>
              </Row>
              <Row>
                <CheckLead $off><Check type="checkbox" id="depth" disabled /><label htmlFor="depth"><u>S</u>chnittiefe:</label></CheckLead>
                <DepthField aria-label="Schnittiefe" defaultValue="0.100" disabled />
              </Row>
              <Row>
                <CheckLead><Check type="checkbox" id="split" /><label htmlFor="split">Volumenelement <u>t</u>eilen</label></CheckLead>
              </Row>
              <Row>
                <CheckLead><Check type="checkbox" id="keep" /><label htmlFor="keep"><u>P</u>rofil beibehalten</label></CheckLead>
              </Row>
            </Form>
            <Badge $x={246} $y={110}>2</Badge>
          </Dialog>
        </Workspace>
      </Main>

      <BottomBar>
        <BarGroup $w={268}>
          <Grip />
          <button aria-label="Zurück"><Round /></button>
          <Drop $w={24} aria-label="Zurück wählen"><Caret s={8} /></Drop>
          <button aria-label="Vor"><Round fwd /></button>
          <Drop $w={24} aria-label="Vor wählen"><Caret s={8} /></Drop>
          <button aria-label="Koordinatensystem">
            <Ic s={20}>
              <ellipse cx="11" cy="14" rx="8" ry="4" stroke="#bbb" />
              <path d="M4 1l3 13 9-4M7 14l-4 3" stroke="#999" strokeWidth="1.500" />
              <path d="M7 14c1-4 4-5 7-3" stroke="#bbb" />
            </Ic>
          </button>
          <Drop $w={20} aria-label="System wählen"><Caret s={8} /></Drop>
          <Pick $w={128} $h={20} $pad={22}>
            {modelsIcon(16)}
            <select aria-label="Modell"><option>Design Model</option></select>
            <Caret s={8} />
          </Pick>
        </BarGroup>
        <BarGroup $w={36} $pad={4}><button aria-label="Modelle">{modelsIcon(24)}</button></BarGroup>
        <BarGroup $w={114}>
          {[1, 2, 3, 4, 5, 6, 7, 8].map((n) => (
            <ViewToggle key={n} $on={n < 5}>{n}</ViewToggle>
          ))}
        </BarGroup>
        <BarGroup $w={126} $pad={5}><Grip /><Axis htmlFor="cx">X</Axis><Coord id="cx" defaultValue="19.343" /></BarGroup>
        <BarGroup $w={121} $pad={7}><Axis htmlFor="cy">Y</Axis><Coord id="cy" defaultValue="8.283" /></BarGroup>
        <BarGroup $w={119} $pad={7}><Axis htmlFor="cz">Z</Axis><Coord id="cz" defaultValue="1.431" /></BarGroup>
      </BottomBar>

      <Status>
        <Prompt>Volumenelemente durch Kurven ausschneiden &gt; Erstes Volu</Prompt>
        <Grip />
        <Cell><svg width="60" height="20" viewBox="0 0 60 20"><path d="M14 6h6l-3-4z" fill="#111" /></svg></Cell>
        <IconCell $w={27}>
          <Ic s={16}><path d="M3 12h7l2-9" stroke="#2d6fd2" /><g fill="#7db3f2" stroke="#2d6fd2"><circle cx="3" cy="12" r="1.500" /><circle cx="10" cy="12" r="1.500" /><circle cx="12" cy="3" r="1.500" /></g></Ic>
        </IconCell>
        <IconCell $w={26}>
          <Ic s={14}><path d="M4 7V4c0-3 6-3 6 0v3" stroke="#777" strokeWidth="1.500" /><path d="M2 6h10v6H2z" fill="#b5a516" stroke="#6b6208" /></Ic>
        </IconCell>
        <Cell $w={114}>333-Aussenstützen</Cell>
        <Cell $w={103} />
        <Cell $w={103}><Feature s={18} />&nbsp;3D-Ändern (3)</Cell>
        <Cell $w={166}>19.343, 8.283, 1.431</Cell>
        <Cell $w={26} /><Cell $w={26} /><Cell $w={26} />
        <IconCell $w={26}><Ic s={16}><path d="M5 2h9c2 0 1 3 0 3h-2l-1 7c1 0 1 2 0 2H3c-2 0-1-3 0-3h3l1-6H5c-2 0-2-3 0-3z" fill="#f5f5f5" stroke="#888" /></Ic></IconCell>
        <IconCell $w={26}><Ic s={16}><path d="M3 8h10v6H3z" fill="#f6f6ff" stroke="#8a8ab5" /><path d="M1 8.500L8 2l7 6.500" stroke="#e8890c" strokeWidth="3" /><path d="M7 10h3v4H7z" fill="#555c9c" /></Ic></IconCell>
        <Cell $w={26} />
        <IconCell $w={21}><Ic s={14}><path d="M2 2h10v8l-5 3-5-3z" fill="#e9e9e9" stroke="#999" /><path d="M5 5h5v4l-3 2-2-2z" stroke="#777" /></Ic></IconCell>
      </Status>
    </Shell>
  );
}
